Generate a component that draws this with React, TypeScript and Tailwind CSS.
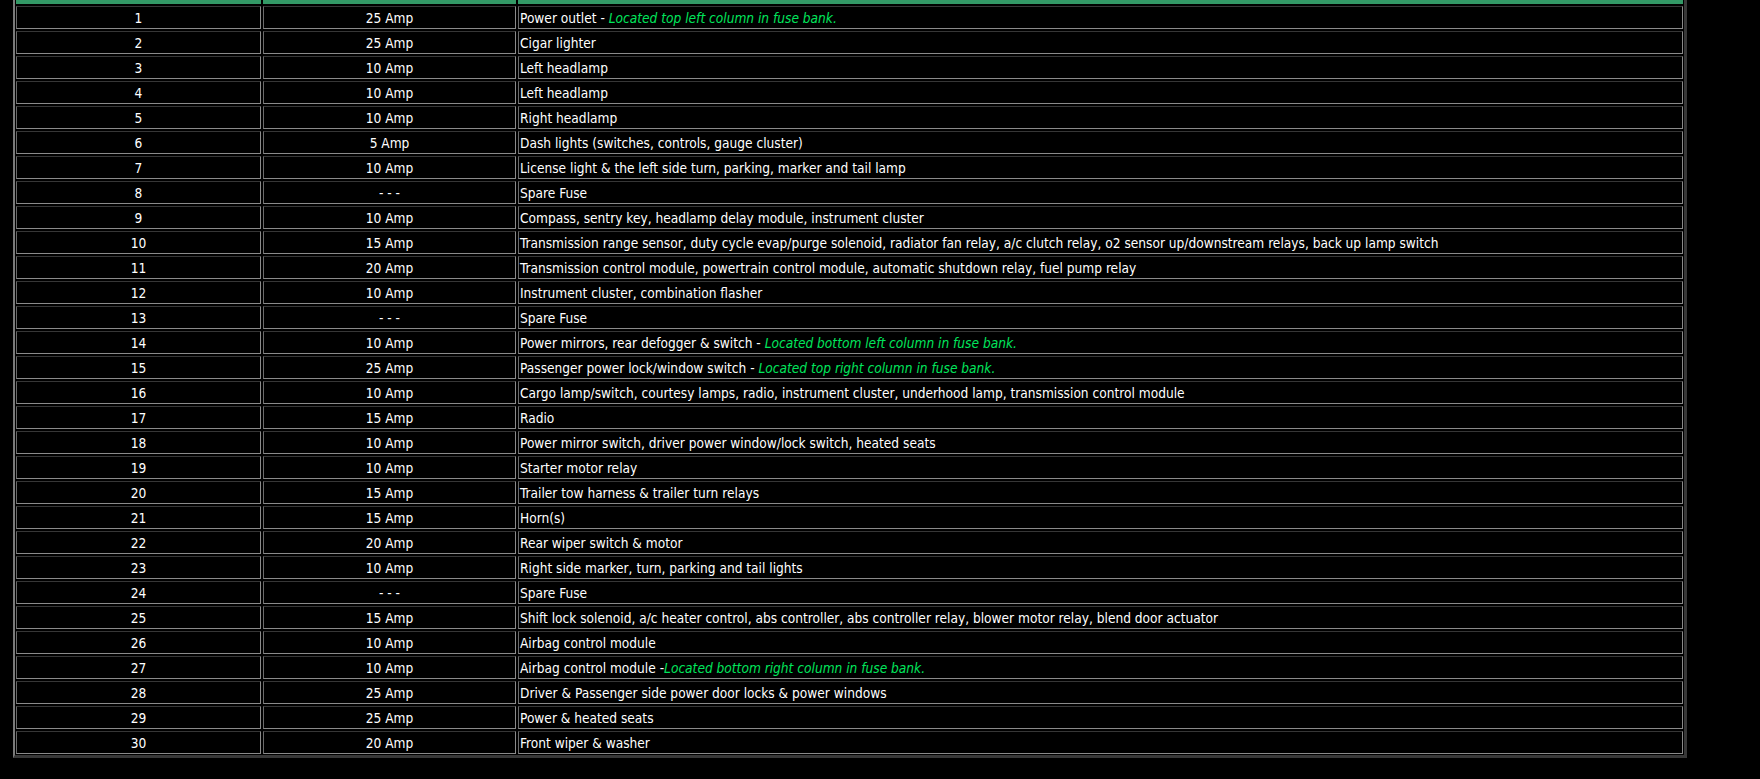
import React from "react";

type Row = { n: number; amp: string; desc: string; note?: string; sep?: string };

const rows: Row[] = [
  { n: 1, amp: "25 Amp", desc: "Power outlet", sep: " - ", note: "Located top left column in fuse bank." },
  { n: 2, amp: "25 Amp", desc: "Cigar lighter" },
  { n: 3, amp: "10 Amp", desc: "Left headlamp" },
  { n: 4, amp: "10 Amp", desc: "Left headlamp" },
  { n: 5, amp: "10 Amp", desc: "Right headlamp" },
  { n: 6, amp: "5 Amp", desc: "Dash lights (switches, controls, gauge cluster)" },
  { n: 7, amp: "10 Amp", desc: "License light & the left side turn, parking, marker and tail lamp" },
  { n: 8, amp: "- - -", desc: "Spare Fuse" },
  { n: 9, amp: "10 Amp", desc: "Compass, sentry key, headlamp delay module, instrument cluster" },
  { n: 10, amp: "15 Amp", desc: "Transmission range sensor, duty cycle evap/purge solenoid, radiator fan relay, a/c clutch relay, o2 sensor up/downstream relays, back up lamp switch" },
  { n: 11, amp: "20 Amp", desc: "Transmission control module, powertrain control module, automatic shutdown relay, fuel pump relay" },
  { n: 12, amp: "10 Amp", desc: "Instrument cluster, combination flasher" },
  { n: 13, amp: "- - -", desc: "Spare Fuse" },
  { n: 14, amp: "10 Amp", desc: "Power mirrors, rear defogger & switch", sep: " - ", note: "Located bottom left column in fuse bank." },
  { n: 15, amp: "25 Amp", desc: "Passenger power lock/window switch", sep: " - ", note: "Located top right column in fuse bank." },
  { n: 16, amp: "10 Amp", desc: "Cargo lamp/switch, courtesy lamps, radio, instrument cluster, underhood lamp, transmission control module" },
  { n: 17, amp: "15 Amp", desc: "Radio" },
  { n: 18, amp: "10 Amp", desc: "Power mirror switch, driver power window/lock switch, heated seats" },
  { n: 19, amp: "10 Amp", desc: "Starter motor relay" },
  { n: 20, amp: "15 Amp", desc: "Trailer tow harness & trailer turn relays" },
  { n: 21, amp: "15 Amp", desc: "Horn(s)" },
  { n: 22, amp: "20 Amp", desc: "Rear wiper switch & motor" },
  { n: 23, amp: "10 Amp", desc: "Right side marker, turn, parking and tail lights" },
  { n: 24, amp: "- - -", desc: "Spare Fuse" },
  { n: 25, amp: "15 Amp", desc: "Shift lock solenoid, a/c heater control, abs controller, abs controller relay, blower motor relay, blend door actuator" },
  { n: 26, amp: "10 Amp", desc: "Airbag control module" },
  { n: 27, amp: "10 Amp", desc: "Airbag control module", sep: " -", note: "Located bottom right column in fuse bank." },
  { n: 28, amp: "25 Amp", desc: "Driver & Passenger side power door locks & power windows" },
  { n: 29, amp: "25 Amp", desc: "Power & heated seats" },
  { n: 30, amp: "20 Amp", desc: "Front wiper & washer" },
];

const cell =
  "border border-t-[#363636] border-l-[#6a6a6a] border-b-[#8a8a8a] border-r-[#8a8a8a] px-px pt-[2px] pb-0 h-[23px] leading-[19px] whitespace-pre";

export default function App() {
  return (
    <div className="bg-black min-h-[779px] w-[1760px] overflow-hidden font-['DejaVu_Sans_Condensed','Liberation_Sans',sans-serif] text-[13.6px] text-white">
      <div className="ml-[13px] -mt-[23px] w-[1674px] border-t-[3px] border-l-2 border-r-[3px] border-b-[3px] border-t-[#7a7a7a] border-l-[#7a7a7a] border-r-[#383838] border-b-[#383838]">
        <table className="-m-px w-[1671px] table-fixed border-separate border-spacing-[2px]">
          <colgroup>
            <col className="w-[245px]" />
            <col className="w-[253px]" />
            <col />
          </colgroup>
          <thead>
            <tr>
              <th className="h-[23px] bg-[#339966] p-0"></th>
              <th className="h-[23px] bg-[#339966] p-0"></th>
              <th className="h-[23px] bg-[#339966] p-0"></th>
            </tr>
          </thead>
          <tbody>
            {rows.map((r) => (
              <tr key={r.n}>
                <td className={cell + " text-center"}>{r.n}</td>
                <td className={cell + " text-center"}>{r.amp}</td>
                <td className={cell + " text-left"}>
                  {r.desc}
                  {r.note ? (
                    <>
                      {r.sep}
                      <i className="text-[#00e65c]">{r.note}</i>
                    </>
                  ) : null}
                </td>
              </tr>
            ))}
          </tbody>
        </table>
      </div>
    </div>
  );
}
